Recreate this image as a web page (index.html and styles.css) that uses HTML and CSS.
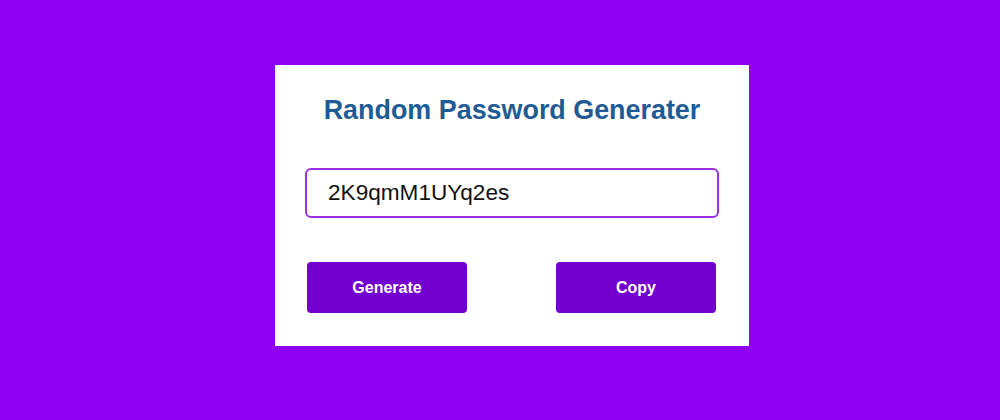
FILE: index.html
```html
<!DOCTYPE html>
<html>
<head>
<meta charset="utf-8">
<link rel="stylesheet" href="styles.css">
</head>
<body>
<div class="page">
  <div class="card">
    <h1 class="title">Random Password Generater</h1>
    <div class="field">2K9qmM1UYq2es</div>
    <div class="actions">
      <button class="btn">Generate</button>
      <button class="btn">Copy</button>
    </div>
  </div>
</div>
</body>
</html>
```
FILE: styles.css
```css
html, body {
  margin: 0;
  padding: 0;
}
body {
  background: #8f00f2;
  font-family: "Liberation Sans", Arial, sans-serif;
  width: 1000px;
  height: 420px;
}
.page {
  padding-top: 65px;
  display: flex;
  justify-content: center;
}
.card {
  box-sizing: border-box;
  width: 474px;
  height: 281px;
  background: #ffffff;
  padding: 27px 30px 0 30px;
  margin-left: 24px;
}
.title {
  margin: 0;
  text-align: center;
  color: #1f5b94;
  font-size: 26.9px;
  font-weight: bold;
  line-height: 36px;
}
.field {
  box-sizing: border-box;
  margin-top: 40px;
  height: 50px;
  border: 2px solid #9b30e0;
  border-radius: 6px;
  padding-left: 21px;
  font-size: 22.6px;
  line-height: 46px;
  color: #111111;
}
.actions {
  display: flex;
  justify-content: space-between;
  margin-top: 44px;
  padding: 0 3px 0 2px;
}
.btn {
  width: 160px;
  height: 51px;
  border: none;
  border-radius: 4px;
  background: #7200cf;
  color: #ffffff;
  font-family: "Liberation Sans", Arial, sans-serif;
  font-weight: bold;
  font-size: 16px;
  padding: 0;
}
```
